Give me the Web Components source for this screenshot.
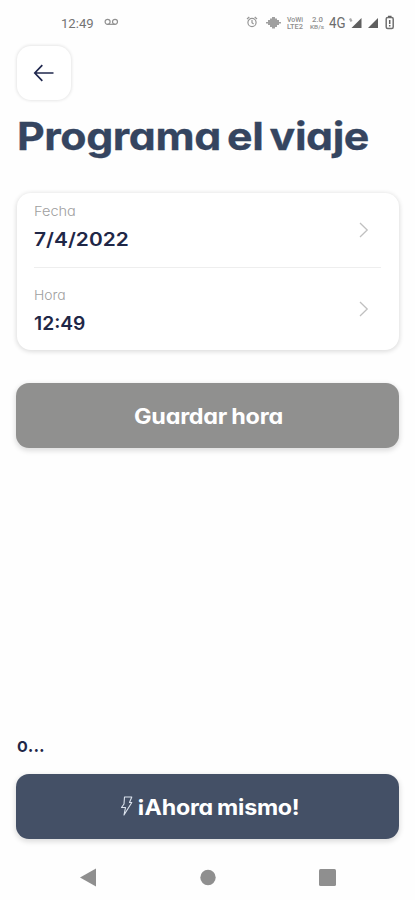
<!DOCTYPE html>
<html lang="es">
<head>
<meta charset="utf-8">
<title>Programa el viaje</title>
<style>
html,body{margin:0;height:100%;background:#fefefe;overflow:hidden}
body{font-family:Inter,"Liberation Sans",sans-serif;font-feature-settings:"cv11"}
</style>
</head>
<body>
<trip-screen></trip-screen>
<script>
const define = (name, html, after) => customElements.define(name, class extends HTMLElement {
  constructor() {
    super();
    this.attachShadow({ mode: 'open' }).innerHTML = html;
  }
  connectedCallback() { if (after) after.call(this); }
});

/* Text stretched horizontally to the width given by its "w" attribute. */
define('fit-text', `<style>
:host{display:block;white-space:nowrap}
span{display:inline-block;transform-origin:0 50%}
</style><span><slot></slot></span>`, function () {
  const w = +this.getAttribute('w');
  const span = this.shadowRoot.querySelector('span');
  this.style.width = w + 'px';
  span.style.transform = `scaleX(${w / span.offsetWidth})`;
});

define('status-bar', `<style>
:host{display:flex;height:45px;box-sizing:border-box;padding:15px 20px 0 61px;color:#747474;font-family:Roboto,sans-serif;align-items:flex-start}
fit-text{font-size:13.500px;line-height:16px}
.vm{margin:2px 0 0 10px}
.right{margin-left:auto;display:block}
text{font-family:Roboto,sans-serif}
</style>
<fit-text w="33">12:49</fit-text>
<svg class="vm" width="15" height="10" viewBox="0 0 15 10" fill="none" stroke="#909090" stroke-width="1.200"><circle cx="3.600" cy="4.800" r="2.500"/><circle cx="11" cy="4.800" r="2.500"/><path d="M3.600 7.300H11"/></svg>
<svg class="right" width="152" height="17" viewBox="0 0 152 17">
<g fill="none" stroke="#969696" stroke-width="1.200"><circle cx="9" cy="7.500" r="4.100"/><path d="M4 4l2.300-2M14 4l-2.300-2M9 5v2.800l1.600 1.200"/></g>
<path fill="#a0a0a0" d="M23 7h2V5h2V3.500h2V2h3v1.500h2V5h2v2h2v1.500h-2V10h-2v2h-2v1.500h-3V12h-2v-2h-2V8.500h-2z"/>
<g fill="#8d8d8d" font-weight="500"><text x="44" y="7.300" font-size="7" textLength="16" lengthAdjust="spacingAndGlyphs">VoWi</text><text x="44" y="14" font-size="7" textLength="16" lengthAdjust="spacingAndGlyphs">LTE2</text>
<text x="69" y="7" font-size="7" textLength="11" lengthAdjust="spacingAndGlyphs">2.0</text><text x="67" y="13.500" font-size="6" textLength="14" lengthAdjust="spacingAndGlyphs">KB/s</text></g>
<text x="86" y="13" font-size="14.500" fill="#6c6c6c" textLength="16.500" lengthAdjust="spacingAndGlyphs">4G</text>
<g fill="#5f5f5f"><path d="M118.500 3v10h-10z"/><path d="M135 3v10h-10z"/><path d="M106 4l2-1 1.500 3-2 1z" fill="#aaa"/></g>
<rect x="143.200" y="2.500" width="7" height="11" rx="1.500" fill="none" stroke="#707070" stroke-width="1.500"/><path d="M145 1.500h3.500M146.700 5v4M146.700 10v1.500" stroke="#606060" stroke-width="1.500"/>
</svg>`);

define('back-button', `<style>
:host{display:flex;width:54px;height:54px;margin:1px 0 0 17px;border-radius:14px;background:#fff;box-shadow:0 0 3px 1px #00000018;align-items:center;justify-content:center}
</style>
<svg width="22" height="18" viewBox="0 0 22 18" fill="none" stroke="#20284e" stroke-width="1.700"><path d="M20.500 9H2M9.300 1.200L1.800 9l7.500 7.800"/></svg>`);

define('field-row', `<style>
:host{display:flex;justify-content:space-between;align-items:flex-start}
.label{font-size:13.500px;line-height:18px;font-weight:300;color:#a0a0a0}
.value{font-size:18.500px;line-height:24px;font-weight:600;color:#1f2747;margin-top:7px}
svg{display:block;margin:var(--chev,17px) 11.500px 0 0}
</style>
<div><fit-text class="label"></fit-text><fit-text class="value"></fit-text></div>
<svg width="12" height="18" viewBox="0 0 12 18" fill="none" stroke="#c0c0c0" stroke-width="1.300"><path d="M2 2l7.200 7L2 16"/></svg>`, function () {
  for (const key of ['label', 'value']) {
    const old = this.shadowRoot.querySelector('.' + key);
    const el = document.createElement('fit-text');
    el.className = key;
    el.textContent = this.getAttribute(key);
    el.setAttribute('w', this.getAttribute(key + '-w'));
    old.replaceWith(el);
  }
});

define('field-card', `<style>
:host{display:block;box-sizing:border-box;width:382px;height:157px;margin-left:17px;padding:9px 18px 0 16.500px;border-radius:14px;background:#fff;box-shadow:0 1px 4px 1px #00000020}
</style><slot></slot>`);

define('action-button', `<style>
:host{display:flex;box-sizing:border-box;width:383px;height:65px;margin-left:16px;border-radius:13px;align-items:center;justify-content:center;background:var(--bg);box-shadow:0 2px 5px 1px #00000020;color:#fff;font-weight:700;font-size:21.500px;line-height:28px;letter-spacing:-.01em;word-spacing:-.05em}
</style><slot></slot>`);

define('nav-bar', `<style>
:host{display:flex;height:24px;margin-top:27px;padding:0 78px 0 79px;justify-content:space-between}
svg{display:block;width:100%;height:24px}
</style>
<svg viewBox="0 0 258 24" fill="#8f8f8f"><path d="M1 11.500L17 2.500v18z"/><circle cx="129" cy="11.500" r="7.700"/><rect x="240" y="3" width="17" height="17" rx="1.500"/></svg>`);

define('trip-screen', `<style>
:host{display:flex;flex-direction:column;width:415px;height:900px}
.title{font-size:38px;line-height:46px;font-weight:700;letter-spacing:-.01em;word-spacing:-.08em;color:#354560;-webkit-text-stroke:.3px #354560;margin:13px 0 0 16.500px}
field-card{margin-top:34px}
hr{border:0;height:1px;background:#eee;margin:16px 0 18px}
.save{--bg:#90908f;margin-top:33px}
.save fit-text{margin-left:1px}
.or{font-size:19px;line-height:24px;font-weight:600;color:#1f2747;margin:286px 0 0 17px}
.now{--bg:#445066;margin-top:16px;padding-left:4px;font-feature-settings:"cv11","case"}
.now svg{margin:-1px 4px 0 0}
</style>
<status-bar></status-bar>
<back-button></back-button>
<fit-text class="title" w="352">Programa el viaje</fit-text>
<field-card>
<field-row label="Fecha" label-w="42" value="7/4/2022" value-w="95" style="--chev:19px"></field-row>
<hr>
<field-row label="Hora" label-w="32" value="12:49" value-w="51" style="--chev:14px"></field-row>
</field-card>
<action-button class="save"><fit-text w="149">Guardar hora</fit-text></action-button>
<fit-text class="or" w="28">o...</fit-text>
<action-button class="now"><svg width="13" height="20" viewBox="0 0 13 20" fill="none" stroke="#dce3ee" stroke-width="1.100" stroke-linejoin="round"><path d="M4.500 1h7.300L9.500 6.500h2.300L4 19l1.500-7.500H1.500L4 8z"/></svg><fit-text w="162">¡Ahora mismo!</fit-text></action-button>
<nav-bar></nav-bar>`);
</script>
</body>
</html>
